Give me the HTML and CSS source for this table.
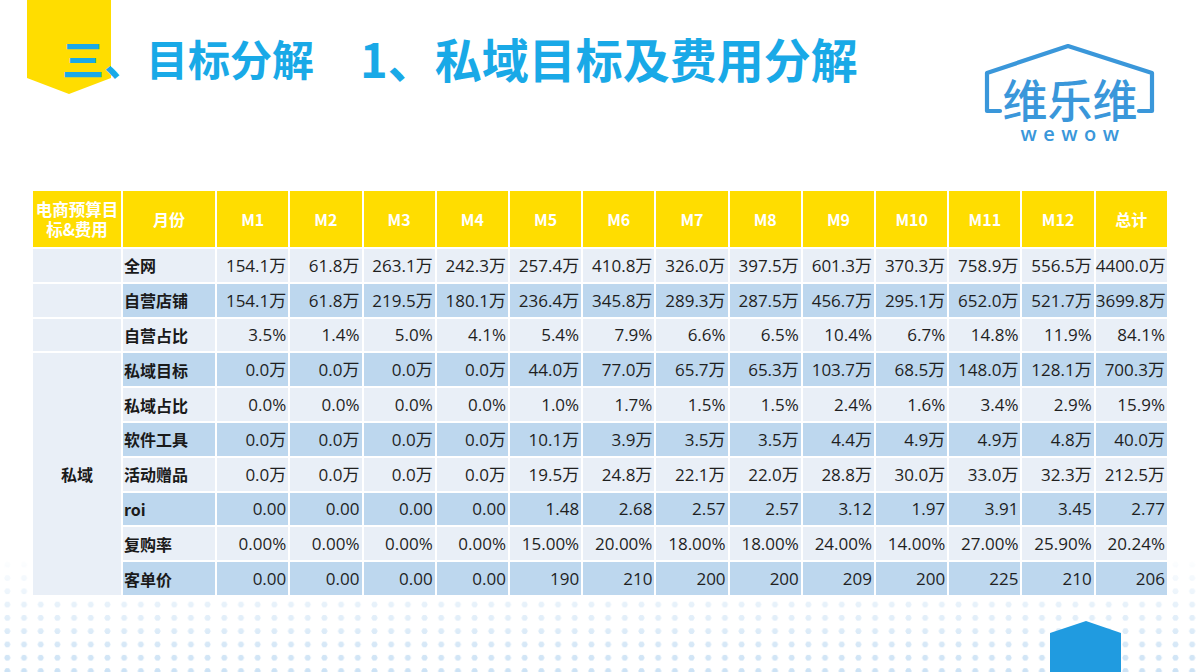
FILE: index.html
```html
<!DOCTYPE html>
<html lang="zh-CN">
<head>
<meta charset="utf-8">
<title>三、目标分解 1、私域目标及费用分解</title>
<link rel="stylesheet" href="styles.css">
</head>
<body>
<div class="slide">
  <div class="deco-dots"></div>
  <div class="banner"></div>
  <div class="house-corner"></div>

  <header class="header">
    <h1 class="title"><span class="t1">三、目标分解</span><span class="t2">1、私域目标及费用分解</span></h1>
    <div class="logo">
      <svg class="logo-house" width="174" height="72" viewBox="0 0 174 72" aria-hidden="true">
        <path d="M17 68 H4 V30 L85 3 L169 30 V68 H156" fill="none" stroke="#3a97da" stroke-width="4.2" stroke-linejoin="round" stroke-linecap="round"/>
      </svg>
      <div class="logo-cn">维乐维</div>
      <div class="logo-en">wewow</div>
    </div>
  </header>

  <main class="table-wrap">
    <table class="budget">
      <colgroup>
        <col class="c-cat"><col class="c-lab">
        <col class="c-num"><col class="c-num"><col class="c-num"><col class="c-num"><col class="c-num"><col class="c-num"><col class="c-num"><col class="c-num"><col class="c-num"><col class="c-num"><col class="c-num"><col class="c-num"><col class="c-num">
      </colgroup>
      <thead>
        <tr>
          <th class="h-cat">电商预算目标&amp;费用</th>
          <th>月份</th>
          <th>M1</th><th>M2</th><th>M3</th><th>M4</th><th>M5</th><th>M6</th><th>M7</th><th>M8</th><th>M9</th><th>M10</th><th>M11</th><th>M12</th><th>总计</th>
        </tr>
      </thead>
      <tbody>
        <tr class="lt">
          <td class="cat"></td><td class="lab">全网</td>
          <td>154.1万</td><td>61.8万</td><td>263.1万</td><td>242.3万</td><td>257.4万</td><td>410.8万</td><td>326.0万</td><td>397.5万</td><td>601.3万</td><td>370.3万</td><td>758.9万</td><td>556.5万</td><td>4400.0万</td>
        </tr>
        <tr class="bl">
          <td class="cat"></td><td class="lab">自营店铺</td>
          <td>154.1万</td><td>61.8万</td><td>219.5万</td><td>180.1万</td><td>236.4万</td><td>345.8万</td><td>289.3万</td><td>287.5万</td><td>456.7万</td><td>295.1万</td><td>652.0万</td><td>521.7万</td><td>3699.8万</td>
        </tr>
        <tr class="lt">
          <td class="cat"></td><td class="lab">自营占比</td>
          <td>3.5%</td><td>1.4%</td><td>5.0%</td><td>4.1%</td><td>5.4%</td><td>7.9%</td><td>6.6%</td><td>6.5%</td><td>10.4%</td><td>6.7%</td><td>14.8%</td><td>11.9%</td><td>84.1%</td>
        </tr>
        <tr class="bl">
          <td class="cat" rowspan="7">私域</td><td class="lab">私域目标</td>
          <td>0.0万</td><td>0.0万</td><td>0.0万</td><td>0.0万</td><td>44.0万</td><td>77.0万</td><td>65.7万</td><td>65.3万</td><td>103.7万</td><td>68.5万</td><td>148.0万</td><td>128.1万</td><td>700.3万</td>
        </tr>
        <tr class="lt">
          <td class="lab">私域占比</td>
          <td>0.0%</td><td>0.0%</td><td>0.0%</td><td>0.0%</td><td>1.0%</td><td>1.7%</td><td>1.5%</td><td>1.5%</td><td>2.4%</td><td>1.6%</td><td>3.4%</td><td>2.9%</td><td>15.9%</td>
        </tr>
        <tr class="bl">
          <td class="lab">软件工具</td>
          <td>0.0万</td><td>0.0万</td><td>0.0万</td><td>0.0万</td><td>10.1万</td><td>3.9万</td><td>3.5万</td><td>3.5万</td><td>4.4万</td><td>4.9万</td><td>4.9万</td><td>4.8万</td><td>40.0万</td>
        </tr>
        <tr class="lt">
          <td class="lab">活动赠品</td>
          <td>0.0万</td><td>0.0万</td><td>0.0万</td><td>0.0万</td><td>19.5万</td><td>24.8万</td><td>22.1万</td><td>22.0万</td><td>28.8万</td><td>30.0万</td><td>33.0万</td><td>32.3万</td><td>212.5万</td>
        </tr>
        <tr class="bl">
          <td class="lab">roi</td>
          <td>0.00</td><td>0.00</td><td>0.00</td><td>0.00</td><td>1.48</td><td>2.68</td><td>2.57</td><td>2.57</td><td>3.12</td><td>1.97</td><td>3.91</td><td>3.45</td><td>2.77</td>
        </tr>
        <tr class="lt">
          <td class="lab">复购率</td>
          <td>0.00%</td><td>0.00%</td><td>0.00%</td><td>0.00%</td><td>15.00%</td><td>20.00%</td><td>18.00%</td><td>18.00%</td><td>24.00%</td><td>14.00%</td><td>27.00%</td><td>25.90%</td><td>20.24%</td>
        </tr>
        <tr class="bl">
          <td class="lab">客单价</td>
          <td>0.00</td><td>0.00</td><td>0.00</td><td>0.00</td><td>190</td><td>210</td><td>200</td><td>200</td><td>209</td><td>200</td><td>225</td><td>210</td><td>206</td>
        </tr>
      </tbody>
    </table>
  </main>
</div>
</body>
</html>
```

FILE: styles.css
```css
* { box-sizing: border-box; }

html, body {
  margin: 0;
  padding: 0;
}

body {
  width: 1200px;
  height: 672px;
  overflow: hidden;
  background: #ffffff;
  font-family: "Noto Sans CJK SC", "Noto Sans", sans-serif;
}

.slide {
  position: relative;
  width: 1200px;
  height: 672px;
  overflow: hidden;
}

/* decorative dot field along the bottom */
.deco-dots {
  position: absolute;
  left: 0;
  right: 0;
  bottom: 0;
  height: 116px;
  background-image: radial-gradient(circle at center, #cce2f5 2.7px, rgba(204, 226, 245, 0) 3.3px);
  background-size: 16.7px 13.3px;
  background-position: -1px 2px;
  -webkit-mask-image: linear-gradient(to bottom, rgba(0,0,0,0) 0%, rgba(0,0,0,0.4) 35%, rgba(0,0,0,1) 100%);
  mask-image: linear-gradient(to bottom, rgba(0,0,0,0) 0%, rgba(0,0,0,0.4) 35%, rgba(0,0,0,1) 100%);
}

/* yellow bookmark ribbon behind the title */
.banner {
  position: absolute;
  left: 27px;
  top: 0;
  width: 84px;
  height: 94px;
  background: #ffdd00;
  clip-path: polygon(0 0, 100% 0, 100% 83%, 50% 100%, 0 83%);
}

/* blue house shape in the bottom-right corner */
.house-corner {
  position: absolute;
  left: 1050px;
  top: 621px;
  width: 71px;
  height: 51px;
  background: #209be0;
  clip-path: polygon(0 23.5%, 50.7% 0, 100% 23.5%, 100% 100%, 0 100%);
  z-index: 2;
}

.header {
  position: relative;
  z-index: 1;
  display: flex;
  justify-content: space-between;
  align-items: flex-start;
  height: 189px;
  padding: 0 43px 0 62px;
}

.title {
  margin: 34px 0 0;
  height: 47px;
  display: flex;
  align-items: center;
  color: #19a9e7;
  font-weight: 700;
  line-height: 1;
  white-space: nowrap;
}

.t1 { font-size: 42px; }
.t2 { font-size: 47px; margin-left: 46px; }

.logo {
  position: relative;
  width: 174px;
  margin-top: 43px;
  padding-top: 34px;
  text-align: center;
  color: #3a97da;
}

.logo-house {
  position: absolute;
  left: 0;
  top: 0;
}

.logo-cn {
  height: 44px;
  font-size: 45px;
  line-height: 44px;
  font-weight: 500;
}

.logo-en {
  margin-top: 3px;
  height: 20px;
  font-family: "Open Sans", "Noto Sans", sans-serif;
  font-weight: 600;
  font-size: 20px;
  line-height: 20px;
  letter-spacing: 6.5px;
  padding-left: 6px;
}

.table-wrap {
  position: relative;
  z-index: 1;
  padding-left: 31px;
}

.budget {
  border-collapse: separate;
  border-spacing: 2px;
  table-layout: fixed;
  width: 1138px;
  background: #ffffff;
}

.c-cat { width: 88px; }
.c-lab { width: 92px; }
.c-num { width: 71.2px; }

.budget th {
  height: 56px;
  padding: 0;
  background: #ffdd00;
  color: #ffffff;
  font-weight: 700;
  font-size: 16px;
  text-align: center;
  vertical-align: middle;
  white-space: nowrap;
}

.budget th.h-cat {
  white-space: normal;
  font-size: 16.5px;
  line-height: 20px;
}

.budget td {
  height: 32.8px;
  padding: 0 2px 0 0;
  font-family: "Open Sans", "Noto Sans CJK SC", sans-serif;
  font-size: 17px;
  line-height: 1;
  color: #1f1f1f;
  text-align: right;
  vertical-align: middle;
  white-space: nowrap;
}

.budget tr.lt td { background: #e9eff7; }
.budget tr.bl td { background: #bdd7ee; }

.budget td.lab {
  padding: 0 0 0 1px;
  text-align: left;
  font-family: "Noto Sans CJK SC", sans-serif;
  font-weight: 700;
  font-size: 16px;
  color: #1a1a1a;
}

.budget tr td.cat {
  background: #e9eff7;
  padding: 0;
  text-align: center;
  font-family: "Noto Sans CJK SC", sans-serif;
  font-weight: 700;
  font-size: 16px;
  color: #1a1a1a;
}
```
